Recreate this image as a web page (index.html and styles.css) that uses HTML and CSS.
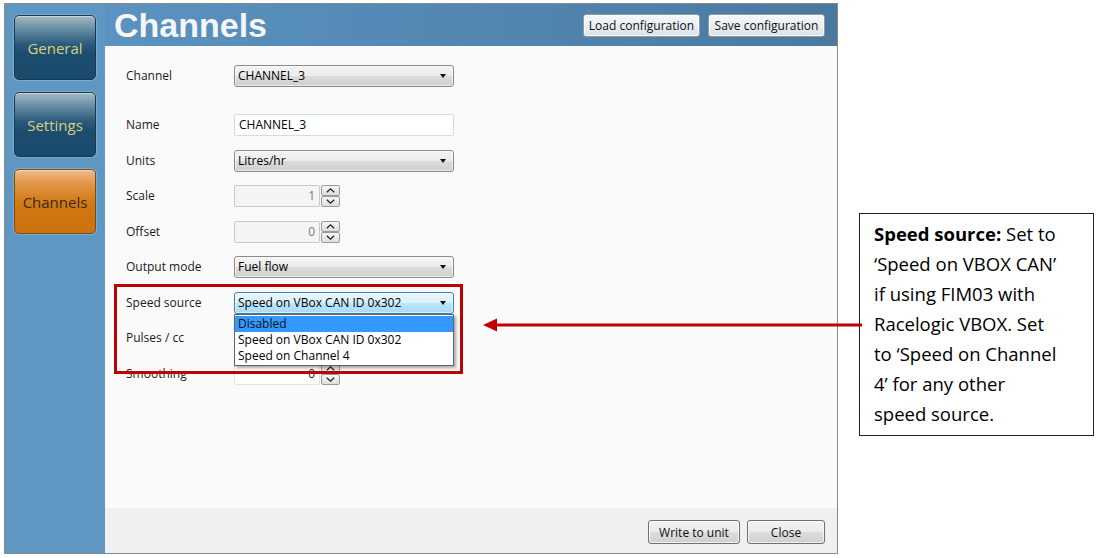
FILE: index.html
```html
<!DOCTYPE html>
<html lang="en">
<head>
  <meta charset="UTF-8">
  <title>Channels</title>
  <link rel="stylesheet" href="styles.css">
</head>
<body>

  <div class="page">
    <div class="window">
      <div class="sidebar">
        <button class="nav-btn">General</button>
        <button class="nav-btn">Settings</button>
        <button class="nav-btn active">Channels</button>
      </div>

      <div class="header">
        <h1>Channels</h1>
        <div class="header-actions">
          <button class="btn">Load configuration</button>
          <button class="btn">Save configuration</button>
        </div>
      </div>

      <div class="content">
        <div class="form">
          <label>Channel</label>
          <div class="combo"><span>CHANNEL_3</span><i class="caret"></i></div>

          <div class="spacer"></div>

          <label>Name</label>
          <div class="textbox">CHANNEL_3</div>

          <label>Units</label>
          <div class="combo"><span>Litres/hr</span><i class="caret"></i></div>

          <label>Scale</label>
          <div class="spin">
            <div class="spin-value disabled">1</div>
            <div class="spin-buttons">
              <svg width="19" height="11" viewBox="0 0 19 11"><polyline points="5,7.5 9.5,3.5 14,7.5" /></svg>
              <svg width="19" height="11" viewBox="0 0 19 11"><polyline points="5,3.5 9.5,7.5 14,3.5" /></svg>
            </div>
          </div>

          <label>Offset</label>
          <div class="spin">
            <div class="spin-value disabled">0</div>
            <div class="spin-buttons">
              <svg width="19" height="11" viewBox="0 0 19 11"><polyline points="5,7.5 9.5,3.5 14,7.5" /></svg>
              <svg width="19" height="11" viewBox="0 0 19 11"><polyline points="5,3.5 9.5,7.5 14,3.5" /></svg>
            </div>
          </div>

          <label>Output mode</label>
          <div class="combo"><span>Fuel flow</span><i class="caret"></i></div>

          <label>Speed source</label>
          <div class="combo open">
            <span>Speed on VBox CAN ID 0x302</span><i class="caret"></i>
            <ul class="dropdown">
              <li class="selected">Disabled</li>
              <li>Speed on VBox CAN ID 0x302</li>
              <li>Speed on Channel 4</li>
            </ul>
          </div>

          <label>Pulses / cc</label>
          <div class="spin">
            <div class="spin-value"></div>
            <div class="spin-buttons">
              <svg width="19" height="11" viewBox="0 0 19 11"><polyline points="5,7.5 9.5,3.5 14,7.5" /></svg>
              <svg width="19" height="11" viewBox="0 0 19 11"><polyline points="5,3.5 9.5,7.5 14,3.5" /></svg>
            </div>
          </div>

          <label>Smoothing</label>
          <div class="spin">
            <div class="spin-value">0</div>
            <div class="spin-buttons">
              <svg width="19" height="11" viewBox="0 0 19 11"><polyline points="5,7.5 9.5,3.5 14,7.5" /></svg>
              <svg width="19" height="11" viewBox="0 0 19 11"><polyline points="5,3.5 9.5,7.5 14,3.5" /></svg>
            </div>
          </div>
        </div>
      </div>

      <div class="footer">
        <button class="btn footer-btn">Write to unit</button>
        <button class="btn footer-btn close">Close</button>
      </div>
    </div>

    <div class="callout">
      <b>Speed source:</b> Set to<br>
      &lsquo;Speed on VBOX CAN&rsquo;<br>
      if using FIM03 with<br>
      Racelogic VBOX. Set<br>
      to &lsquo;Speed on Channel<br>
      4&rsquo; for any other<br>
      speed source.
    </div>
  </div>

  <!-- annotation overlay -->
  <div class="highlight-box"></div>
  <svg class="arrow" width="384" height="20" viewBox="0 0 384 20">
    <line x1="14" y1="10" x2="380" y2="10" />
    <polygon points="1,10 15,3.5 15,16.5" />
  </svg>

</body>
</html>
```

FILE: styles.css
```css
/* Page and window frame */
body {
  margin: 0;
  background-color: #ffffff;
  font-family: "Open Sans", "Noto Sans", sans-serif;
  position: relative;
  width: 1100px;
  height: 558px;
  overflow: hidden;
}

.page {
  display: flex;
  align-items: flex-start;
  padding: 3px 0 0 4px;
}

.window {
  width: 832px;
  height: 549px;
  border: 1px solid #8a8a8a;
  display: grid;
  grid-template-columns: 100px 1fr;
  grid-template-rows: 42px 1fr 45px;
  background-color: #6096c2;
}

/* Left navigation */
.sidebar {
  grid-row: 1 / 4;
  background-color: #6096c2;
  display: flex;
  flex-direction: column;
  gap: 12px;
  padding: 11px 0 0 9px;
}

.nav-btn {
  width: 82px;
  height: 65px;
  border: 1px solid #17394f;
  border-radius: 5px;
  background: linear-gradient(to bottom, #a7b9c3 0%, #6f93a8 18%, #2a5a7c 45%, #1c4d6f 60%, #1b4b6c 100%);
  box-shadow: 0 0 0 1px rgba(140, 185, 220, 0.6), inset 0 1px 0 rgba(255, 255, 255, 0.4);
  color: #d9d07c;
  font-family: "Open Sans", sans-serif;
  font-size: 15px;
  padding: 0;
  cursor: pointer;
}

.nav-btn.active {
  border-color: #7a4a12;
  background: linear-gradient(to bottom, #efbd8f 0%, #e49a52 18%, #d5801f 45%, #cf7612 60%, #cc7310 100%);
  color: #3a2a12;
}

/* Title bar */
.header {
  background: linear-gradient(to right, #5b92bf 0%, #5387b2 50%, #4a799f 100%);
  display: flex;
  justify-content: space-between;
  align-items: flex-start;
  padding: 0 12px 0 9px;
}

.header h1 {
  margin: 0;
  font-family: "Liberation Sans", Arial, sans-serif;
  font-size: 34px;
  font-weight: bold;
  color: #f4f6f8;
  line-height: 44px;
  margin-top: -1px;
}

.header-actions {
  display: flex;
  gap: 8px;
  padding-top: 10px;
}

.btn {
  font-family: "Open Sans", sans-serif;
  font-size: 12px;
  color: #111;
  height: 24px;
  padding: 0 5px;
  border: 1px solid #8b9dab;
  border-radius: 3px;
  background: linear-gradient(to bottom, #f6f8fa 0%, #e9eef2 50%, #d9e2e9 100%);
  box-shadow: inset 0 0 0 1px rgba(255, 255, 255, 0.7);
  cursor: pointer;
}

.header-actions .btn {
  width: 117px;
  height: 23px;
  padding: 0;
}

/* Form area */
.content {
  background-color: #fafafa;
}

.form {
  display: grid;
  grid-template-columns: 108px 220px;
  grid-template-rows: 22px 0px repeat(8, 22px);
  row-gap: 13.5px;
  padding: 19px 0 0 21px;
}

.form label {
  font-size: 12px;
  color: #1a1a1a;
  line-height: 22px;
}

.spacer {
  grid-column: 1 / -1;
}

.combo {
  position: relative;
  height: 20px;
  border: 1px solid #8a8a8a;
  border-radius: 3px;
  background: linear-gradient(to bottom, #f4f4f4 0%, #ebebeb 50%, #dcdcdc 51%, #cfcfcf 100%);
  box-shadow: inset 0 0 0 1px rgba(255, 255, 255, 0.6);
  font-size: 12px;
  line-height: 20px;
  padding-left: 3px;
  color: #000;
}

.combo.open {
  border-color: #3c7fb1;
  background: linear-gradient(to bottom, #eaf6fd 0%, #d9f0fc 50%, #bee6fd 51%, #a7d9f5 100%);
}

.caret {
  position: absolute;
  right: 7px;
  top: 8px;
  width: 0;
  height: 0;
  border-left: 3.5px solid transparent;
  border-right: 3.5px solid transparent;
  border-top: 4px solid #111;
}

.textbox {
  height: 20px;
  border: 1px solid #d4dbe2;
  border-radius: 2px;
  background-color: #ffffff;
  font-size: 12px;
  line-height: 20px;
  padding-left: 4px;
  width: 214px;
}

.spin {
  display: flex;
  width: 106px;
  height: 22px;
}

.spin-value {
  width: 80px;
  height: 20px;
  border: 1px solid #e2e3ea;
  border-radius: 2px;
  background-color: #ffffff;
  font-size: 12px;
  line-height: 20px;
  text-align: right;
  padding-right: 4px;
  color: #222;
}

.spin-value.disabled {
  background-color: #f4f4f4;
  border-color: #c9c9c9;
  color: #7a7a7a;
}

.spin-buttons {
  display: flex;
  flex-direction: column;
  margin-left: 1px;
}

.spin-buttons svg {
  display: block;
  border: 1px solid #9a9a9a;
  border-radius: 2px;
  background: linear-gradient(to bottom, #f6f6f6, #dedede);
  width: 17px;
  height: 9px;
}

.spin-buttons polyline {
  fill: none;
  stroke: #222;
  stroke-width: 1.6;
}

/* Open drop-down list */
.dropdown {
  position: absolute;
  left: -1px;
  top: 21px;
  width: 218px;
  margin: 0;
  padding: 1px 0;
  list-style: none;
  background-color: #ffffff;
  border: 1px solid #646464;
  box-shadow: 2px 2px 3px rgba(0, 0, 0, 0.35);
  z-index: 5;
}

.dropdown li {
  height: 16px;
  line-height: 16px;
  padding-left: 3px;
  font-size: 12px;
  color: #000;
}

.dropdown li.selected {
  background-color: #3399ff;
  color: #111;
}

/* Bottom bar */
.footer {
  background-color: #f0f0f0;
  display: flex;
  justify-content: flex-end;
  align-items: flex-start;
  gap: 7px;
  padding: 12px 12px 0 0;
}

.footer-btn {
  width: 92px;
  height: 24px;
  border-color: #707070;
  background: linear-gradient(to bottom, #f2f2f2 0%, #ebebeb 50%, #dddddd 51%, #cfcfcf 100%);
}

.footer-btn.close {
  width: 78px;
}

/* Callout text box */
.callout {
  margin: 210px 0 0 21px;
  width: 205px;
  height: 209px;
  border: 1px solid #222;
  padding: 5px 14px 7px 14px;
  font-family: "Open Sans", sans-serif;
  font-size: 18.5px;
  line-height: 30px;
  color: #000;
  white-space: nowrap;
}

/* Annotation overlays */
.highlight-box {
  position: absolute;
  left: 114px;
  top: 284px;
  width: 343px;
  height: 84px;
  border: 3px solid #c00000;
  z-index: 10;
}

.arrow {
  position: absolute;
  left: 482px;
  top: 315px;
  z-index: 10;
}

.arrow line {
  stroke: #c00000;
  stroke-width: 3;
}

.arrow polygon {
  fill: #c00000;
}
```
